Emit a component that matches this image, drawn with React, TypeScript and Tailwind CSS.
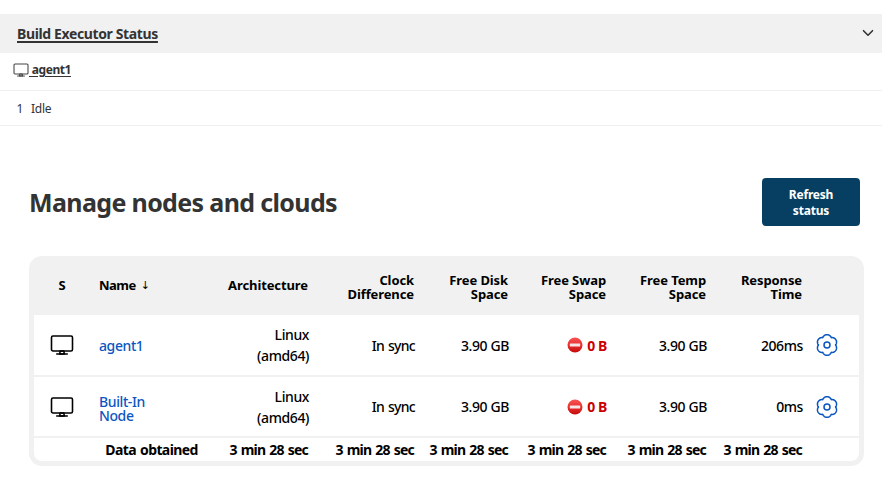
import type { ReactNode } from 'react';

const COLS =
  'grid grid-cols-[56px_123px_106px_106px_94px_98px_100px_96px_46px] items-center';

function Monitor({ className }: { className?: string }) {
  return (
    <svg viewBox="0 0 512 512" className={className} fill="none" stroke="currentColor" strokeWidth={34} strokeLinecap="round" strokeLinejoin="round">
      <rect x="32" y="64" width="448" height="320" rx="32" />
      <path d="M304 448l-8-64h-80l-8 64h96z" />
      <path d="M368 448H144" />
    </svg>
  );
}

// Six wide lobes around the hub with narrow notches between them, the first one pointing up.
const gearOutline = Array.from({ length: 120 }, (_, i) => {
  const a = (i / 120) * Math.PI * 2;
  const r = 8.5 + 1.85 * Math.pow(Math.abs(Math.cos(3 * a)), 0.85);
  return `${(12 + r * Math.sin(a)).toFixed(2)},${(12 - r * Math.cos(a)).toFixed(2)}`;
}).join(' ');

function Gear({ className }: { className?: string }) {
  return (
    <svg viewBox="0 0 24 24" className={className} fill="none" stroke="currentColor" strokeWidth="1.5" strokeLinejoin="round">
      <polygon points={gearOutline} />
      <circle cx="12" cy="12" r="3" />
    </svg>
  );
}

function StopBadge() {
  return (
    <svg viewBox="0 0 16 16" className="h-4 w-4">
      <defs>
        <linearGradient id="stopRed" x1="0" y1="0" x2="0" y2="1">
          <stop offset="0" stopColor="#f75454" />
          <stop offset="0.5" stopColor="#e83030" />
          <stop offset="1" stopColor="#c40b0b" />
        </linearGradient>
      </defs>
      <circle cx="8" cy="8" r="7.5" fill="url(#stopRed)" />
      <rect x="2.8" y="6.4" width="10.4" height="3.2" rx="0.6" fill="#f7e3e3" />
    </svg>
  );
}

const headings: ReactNode[] = [
  <div className="pb-[4px]">Architecture</div>,
  <>Clock<br />Difference</>,
  <>Free Disk<br />Space</>,
  <>Free Swap<br />Space</>,
  <>Free Temp<br />Space</>,
  <>Response<br />Time</>,
];

const nodes = [
  { name: 'agent1', response: '206ms', row: 'h-[62px] pt-px', nudge: 'pb-[2px]', nameCell: '' },
  { name: <>Built-In<br />Node</>, response: '0ms', row: 'h-[61px]', nudge: '', nameCell: 'pt-[5px]' },
];

export default function App() {
  return (
    <div className="h-[498px] w-[882px] overflow-hidden bg-white pt-[14px] font-['Noto_Sans',sans-serif] text-[#333]">
      <div className="flex h-[39px] items-center justify-between bg-[#f1f1f1] pr-[6px] pl-[17px]">
        <a className="text-[14px] font-bold tracking-[-0.37px] underline decoration-2 underline-offset-2">Build Executor Status</a>
        <svg viewBox="0 0 16 16" className="mb-[2px] h-4 w-4" fill="none" stroke="#333" strokeWidth="1.6" strokeLinecap="round" strokeLinejoin="round">
          <path d="M3.5 5.7L8 10.2l4.5-4.5" />
        </svg>
      </div>
      <div className="flex h-[38px] items-center border-b border-[#f0f0f0] pb-[3px] pl-[13px]">
        <Monitor className="h-4 w-4 text-[#444]" />
        <a className="text-[12px] font-bold tracking-[-0.42px] whitespace-pre underline underline-offset-[2px]"> agent1</a>
      </div>
      <div className="flex h-[35px] items-center gap-[8px] border-b border-[#f0f0f0] pt-[2px] pl-[16.5px] text-[12px] tracking-[-0.3px]">
        <span>1</span>
        <span>Idle</span>
      </div>

      <div className="mt-[52px] flex items-start justify-between pr-[22px] pl-[29px]">
        <h1 className="text-[25px] leading-[48px] font-bold tracking-[-0.64px]">Manage nodes and clouds</h1>
        <button className="h-12 w-[98px] rounded bg-[#073f62] pt-[2px] text-center text-[12px] leading-4 font-bold tracking-[-0.2px] text-white">
          Refresh<br />status
        </button>
      </div>

      <div className="mt-[30px] ml-[29px] h-[210px] w-[835px] rounded-[13px] bg-[#f1f1f1] px-[5px] pb-[5px] text-black">
        <div className={`${COLS} h-[59px] pt-[3px] text-[13px] leading-[14px] font-bold tracking-[-0.1px]`}>
          <span className="pb-[4px] text-center">S</span>
          <span className="flex gap-[5px] pb-[4px] pl-[9px] tracking-[-0.5px]">
            Name <span className="pt-px font-['DejaVu_Sans'] text-[11px] font-normal">↓</span>
          </span>
          {headings.map((h, i) => (
            <span key={i} className="pr-[11px] text-right">{h}</span>
          ))}
          <span />
        </div>
        <div className="overflow-hidden rounded-b-[8px] bg-white">
          {nodes.map((n) => (
            <div key={n.response} className={`${COLS} ${n.row} border-b-2 border-[#f1f1f1] text-[14px] font-medium tracking-[-0.4px]`}>
              <span className={`flex justify-center ${n.nudge}`}><Monitor className="h-6 w-6" /></span>
              <a className={`pl-[9px] leading-[14px] text-[#0b56c2] ${n.nameCell}`}>{n.name}</a>
              <span className={`pr-[10px] text-right leading-[21px] ${n.nudge}`}>Linux<br />(amd64)</span>
              <span className="pr-[10px] text-right tracking-[-0.7px] [word-spacing:1px]">In sync</span>
              <span className="pr-[10px] text-right">3.90 GB</span>
              <span className="flex items-center justify-end gap-[4px] pr-[10px] font-bold text-[#cc0003]">
                <span className={n.nudge}><StopBadge /></span>
                <span>0 B</span>
              </span>
              <span className="pr-[10px] text-right">3.90 GB</span>
              <span className="pr-[10px] text-right">{n.response}</span>
              <span className={`ml-[2px] ${n.nudge}`}><Gear className="h-6 w-6 text-[#0b56c2]" /></span>
            </div>
          ))}
          <div className={`${COLS} h-[23px] text-[14px] leading-[21px] font-bold tracking-[-0.75px] [word-spacing:1px]`}>
            <span />
            <span className="text-center tracking-[-0.6px]">Data obtained</span>
            {headings.map((_, i) => (
              <span key={i} className="pr-[11px] text-right whitespace-nowrap">3 min 28 sec</span>
            ))}
          </div>
        </div>
      </div>
    </div>
  );
}
